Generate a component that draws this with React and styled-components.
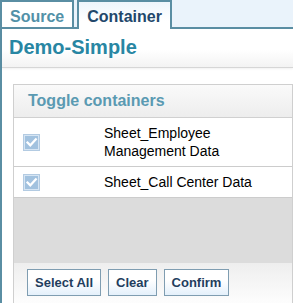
import React from "react";
import styled, { createGlobalStyle } from "styled-components";

const Global = createGlobalStyle`
  html, body { margin: 0; padding: 0; background: #ffffff; }
  body { font-family: "Liberation Sans", Arial, sans-serif; }
`;

const Page = styled.div`
  width: 293px;
  height: 303px;
  overflow: hidden;
  display: flex;
  flex-direction: column;
  background: #ffffff;
`;

const TabBar = styled.div`
  display: flex;
  align-items: flex-start;
  gap: 3px;
  height: 27px;
  background: #eaf3fb;
  border-bottom: 2px solid #5a8ea3;
`;

const Tab = styled.div`
  box-sizing: border-box;
  height: ${(p) => (p.$active ? "29px" : "27px")};
  padding: 3px 8px 0 8px;
  line-height: 24px;
  font-size: 16px;
  font-weight: bold;
  border: 2px solid #5a8ea3;
  border-bottom: none;
  color: ${(p) => (p.$active ? "#22476b" : "#5291a8")};
  background: ${(p) =>
    p.$active ? "linear-gradient(#eef5fc, #ffffff 70%)" : "#ffffff"};
  position: relative;
  z-index: 1;
`;

const Content = styled.div`
  flex: 1;
  display: flex;
  flex-direction: column;
  border-left: 2px solid #5a8ea3;
  min-height: 0;
`;

const TitleBar = styled.div`
  padding: 6px 0 8px 7px;
  background: linear-gradient(#ffffff 55%, #f3f3f3);
  border-bottom: 1px solid #d6d6d6;
  box-shadow: 0 1px 2px rgba(0, 0, 0, 0.06);
`;

const Title = styled.h1`
  margin: 0;
  font-size: 20px;
  line-height: 24px;
  font-weight: bold;
  color: #2886a3;
`;

const Body = styled.div`
  flex: 1;
  padding: 16px 0 0 11px;
  display: flex;
  min-height: 0;
`;

const Panel = styled.div`
  flex: 1;
  display: flex;
  flex-direction: column;
  border: 1px solid #cfcfcf;
  border-bottom: none;
`;

const PanelHeader = styled.div`
  height: 32px;
  padding-left: 14px;
  line-height: 32px;
  font-size: 16px;
  font-weight: bold;
  color: #5a9ab2;
  background: linear-gradient(#fafafa, #ededed);
  border-bottom: 1px solid #d0d0d0;
`;

const Row = styled.div`
  display: grid;
  grid-template-columns: 90px 1fr;
  align-items: center;
  padding: 6px 0;
  background: #ffffff;
  border-bottom: 1px solid #cccccc;
`;

const CheckCell = styled.div`
  display: flex;
  align-items: center;
  padding-left: 9px;
`;

const Label = styled.div`
  font-size: 14px;
  line-height: 18px;
  color: #000000;
`;

const Filler = styled.div`
  flex: 1;
  background: #dcdcdc;
`;

const Footer = styled.div`
  display: flex;
  gap: 7px;
  padding: 6px 0 7px 13px;
  background: linear-gradient(#eeeeee, #fdfdfd);
`;

const Button = styled.button`
  box-sizing: border-box;
  height: 27px;
  padding: 0 7px;
  border: 1px solid #7f9db1;
  border-radius: 0;
  background: linear-gradient(#ffffff 40%, #e4f0fb);
  font-family: "Liberation Sans", Arial, sans-serif;
  font-size: 13px;
  font-weight: bold;
  color: #1f3e5e;
  cursor: pointer;
`;

function CheckBox() {
  return (
    <svg width="17" height="17" viewBox="0 0 17 17">
      <rect x="0.5" y="0.5" width="16" height="16" fill="#d6e5f3" stroke="#b3cbe2" />
      <rect x="2" y="2" width="13" height="13" fill="#a2c2df" />
      <path
        d="M4.5 8.5 L7.3 11.3 L12.8 5.3"
        fill="none"
        stroke="#ffffff"
        strokeWidth="2.2"
        strokeLinecap="square"
      />
    </svg>
  );
}

const items = [
  ["Sheet_Employee", "Management Data"],
  ["Sheet_Call Center Data"],
];

export default function App() {
  return (
    <>
      <Global />
      <Page>
        <TabBar>
          <Tab>Source</Tab>
          <Tab $active>Container</Tab>
        </TabBar>
        <Content>
          <TitleBar>
            <Title>Demo-Simple</Title>
          </TitleBar>
          <Body>
            <Panel>
              <PanelHeader>Toggle containers</PanelHeader>
              {items.map((lines, i) => (
                <Row key={i}>
                  <CheckCell>
                    <CheckBox />
                  </CheckCell>
                  <Label>
                    {lines.map((l, j) => (
                      <div key={j}>{l}</div>
                    ))}
                  </Label>
                </Row>
              ))}
              <Filler />
              <Footer>
                <Button>Select All</Button>
                <Button>Clear</Button>
                <Button>Confirm</Button>
              </Footer>
            </Panel>
          </Body>
        </Content>
      </Page>
    </>
  );
}
